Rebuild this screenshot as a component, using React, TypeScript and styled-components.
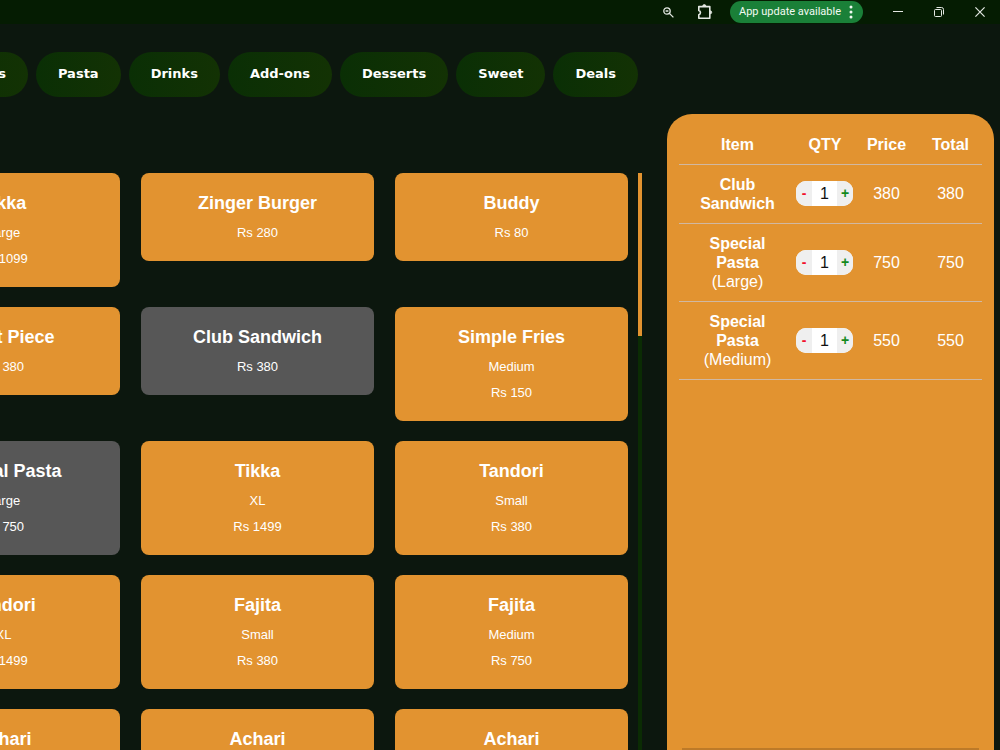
import React from "react";
import styled, { createGlobalStyle } from "styled-components";

const GlobalStyle = createGlobalStyle`
  * { box-sizing: border-box; }
  body {
    margin: 0;
    background: #0c170e;
    color: #fff;
    font-family: "Liberation Sans", Arial, sans-serif;
  }
  button, input { font: inherit; }
`;

const Window = styled.div`
  display: flex;
  flex-direction: column;
  height: 100vh;
  overflow: hidden;
`;

const TitleBar = styled.header`
  display: flex;
  flex: none;
  align-items: center;
  justify-content: flex-end;
  height: 24px;
  background: #051c02;
`;

const BarButton = styled.button<{ $width: number }>`
  display: flex;
  align-items: center;
  justify-content: center;
  width: ${(p) => p.$width}px;
  height: 24px;
  padding: 0;
  border: 0;
  background: none;
  color: #e4e8e3;
`;

const UpdateButton = styled.button`
  display: flex;
  align-items: center;
  justify-content: space-between;
  width: 133px;
  height: 22px;
  margin: 0 14px 0 6px;
  padding: 0 10px 0 9px;
  border: 0;
  border-radius: 11px;
  background: #1a8038;
  color: #f2faf3;
  font-family: Roboto, sans-serif;
  font-size: 11px;
  line-height: 16px;
  white-space: nowrap;
`;

const Body = styled.div`
  display: flex;
  flex: 1;
  min-height: 0;
  gap: 24px;
  padding-right: 6px;
`;

const Main = styled.main`
  display: flex;
  flex: 1;
  flex-direction: column;
  min-width: 0;
  overflow: hidden;
`;

const Categories = styled.nav`
  display: flex;
  flex: none;
  justify-content: flex-end;
  gap: 8px;
  padding: 28px 5px 0 0;
`;

const Category = styled.button`
  flex: none;
  height: 45px;
  padding: 0 22px 2px;
  border: 0;
  border-radius: 23px;
  background: linear-gradient(90deg, #0a2f05, #133204);
  color: #fff;
  font-family: "Arial Black", "DejaVu Sans", sans-serif;
  font-size: 13px;
  font-weight: 700;
`;

const Menu = styled.div`
  display: flex;
  flex: 1;
  gap: 10px;
  min-height: 0;
  margin: 76px 0 0 -113px;
`;

const CardGrid = styled.div`
  display: grid;
  flex: 1;
  grid-template-columns: repeat(3, 1fr);
  align-content: start;
  align-items: start;
  gap: 20px 21px;
`;

const Card = styled.button<{ $selected: boolean }>`
  display: flex;
  flex-direction: column;
  align-items: center;
  gap: 10px;
  padding: 19px 20px 20px;
  border: 0;
  border-radius: 8px;
  background: ${(p) => (p.$selected ? "#575757" : "#e29330")};
  color: #fff;
`;

const CardTitle = styled.strong`
  font-size: 18px;
  line-height: 23px;
`;

const CardLine = styled.span`
  font-size: 13px;
  line-height: 16px;
`;

const ScrollTrack = styled.div`
  width: 4px;
  margin-right: 1px;
  background: #0b2c04;
`;

const ScrollThumb = styled.div`
  height: 163px;
  background: #e29330;
`;

const Order = styled.aside`
  display: flex;
  flex: none;
  flex-direction: column;
  justify-content: space-between;
  width: 327px;
  margin-top: 90px;
  padding: 11px 12px 0;
  border-radius: 25px 25px 0 0;
  background: #e29330;
`;

const OrderTable = styled.table`
  width: 100%;
  border-collapse: collapse;
  table-layout: fixed;
  font-size: 16px;
  line-height: 19px;
  text-align: center;
`;

const OrderRow = styled.tr`
  border-bottom: 1px solid #d0b8a2;
`;

const HeadCell = styled.th<{ $width: string }>`
  width: ${(p) => p.$width};
  padding: 10px 0;
`;

const Cell = styled.td`
  padding: 9px 0 10px;
`;

const NameCell = styled.td`
  padding: 10px;
`;

const Size = styled.span`
  display: block;
`;

const Stepper = styled.div`
  display: flex;
  width: 57px;
  height: 25px;
  overflow: hidden;
  border-radius: 10px;
  background: #fff;
`;

const StepButton = styled.button<{ $color: string }>`
  flex: none;
  width: 16px;
  padding: 0;
  border: 0;
  background: #efefef;
  color: ${(p) => p.$color};
  font-size: 14px;
  font-weight: 700;
`;

const Quantity = styled.input`
  flex: 1;
  width: 100%;
  min-width: 0;
  padding: 0;
  border: 0;
  background: #fff;
  color: #111;
  text-align: center;
`;

const Footer = styled.div`
  height: 2px;
  margin: 0 3px;
  background: #bd7a28;
`;

const categories = ["Burgers", "Pasta", "Drinks", "Add-ons", "Desserts", "Sweet", "Deals"];

type Dish = { title: string; lines: string[]; selected?: boolean };

const dishes: Dish[] = [
  { title: "Tikka", lines: ["Large", "Rs 1099"] },
  { title: "Zinger Burger", lines: ["Rs 280"] },
  { title: "Buddy", lines: ["Rs 80"] },
  { title: "Chest Piece", lines: ["Rs 380"] },
  { title: "Club Sandwich", lines: ["Rs 380"], selected: true },
  { title: "Simple Fries", lines: ["Medium", "Rs 150"] },
  { title: "Special Pasta", lines: ["Large", "Rs 750"], selected: true },
  { title: "Tikka", lines: ["XL", "Rs 1499"] },
  { title: "Tandori", lines: ["Small", "Rs 380"] },
  { title: "Tandori", lines: ["XL", "Rs 1499"] },
  { title: "Fajita", lines: ["Small", "Rs 380"] },
  { title: "Fajita", lines: ["Medium", "Rs 750"] },
  { title: "Achari", lines: [] },
  { title: "Achari", lines: [] },
  { title: "Achari", lines: [] },
];

const order = [
  { name: "Club Sandwich", size: "", price: 380 },
  { name: "Special Pasta", size: "(Large)", price: 750 },
  { name: "Special Pasta", size: "(Medium)", price: 550 },
];

export default function App() {
  return (
    <>
      <GlobalStyle />
      <Window>
        <TitleBar>
          <BarButton $width={36} aria-label="Zoom">
            <svg width="11" height="11" viewBox="0 0 11 11" fill="none" stroke="currentColor" strokeWidth="1.3">
              <circle cx="4" cy="4" r="3.2" />
              <path d="M6.4 6.4 10.4 10.4M2.6 4h2.8" />
            </svg>
          </BarButton>
          <BarButton $width={38} aria-label="Extensions">
            <svg width="16" height="16" viewBox="0 0 16 16" fill="none" stroke="currentColor" strokeWidth="1.6" strokeLinejoin="round">
              <path d="M1.8 2.6h11v11.6h-11v-3.4c2.2-.6 2.2-3.8 0-4.4z" />
              <path d="M5.8 2a1.5 1.5 0 0 1 3 0zM13.2 6.8a1.5 1.5 0 0 1 0 3z" fill="currentColor" strokeWidth=".8" />
            </svg>
          </BarButton>
          <UpdateButton>
            App update available
            <svg width="4" height="14" viewBox="0 0 4 14" fill="currentColor">
              <circle cx="2" cy="2" r="1.5" />
              <circle cx="2" cy="7" r="1.5" />
              <circle cx="2" cy="12" r="1.5" />
            </svg>
          </UpdateButton>
          <BarButton $width={41} aria-label="Minimize">
            <svg width="10" height="10" viewBox="0 0 10 10" stroke="currentColor">
              <path d="M0 4.5h10" />
            </svg>
          </BarButton>
          <BarButton $width={42} aria-label="Restore">
            <svg width="10" height="10" viewBox="0 0 10 10" fill="none" stroke="currentColor">
              <rect x="0.5" y="2.5" width="7" height="7" rx="1" />
              <path d="M2.5 .5h5a2 2 0 0 1 2 2v5" />
            </svg>
          </BarButton>
          <BarButton $width={40} aria-label="Close">
            <svg width="10" height="10" viewBox="0 0 10 10" stroke="currentColor" strokeWidth="1.2">
              <path d="m.4.4 9.2 9.2M9.6.4.4 9.6" />
            </svg>
          </BarButton>
        </TitleBar>
        <Body>
          <Main>
            <Categories>
              {categories.map((name) => (
                <Category key={name}>{name}</Category>
              ))}
            </Categories>
            <Menu>
              <CardGrid>
                {dishes.map((dish, i) => (
                  <Card key={i} $selected={Boolean(dish.selected)}>
                    <CardTitle>{dish.title}</CardTitle>
                    {dish.lines.map((line) => (
                      <CardLine key={line}>{line}</CardLine>
                    ))}
                  </Card>
                ))}
              </CardGrid>
              <ScrollTrack>
                <ScrollThumb />
              </ScrollTrack>
            </Menu>
          </Main>
          <Order>
            <OrderTable>
              <thead>
                <OrderRow>
                  <HeadCell $width="117px">Item</HeadCell>
                  <HeadCell $width="58px">QTY</HeadCell>
                  <HeadCell $width="65px">Price</HeadCell>
                  <HeadCell $width="auto">Total</HeadCell>
                </OrderRow>
              </thead>
              <tbody>
                {order.map((item, i) => (
                  <OrderRow key={i}>
                    <NameCell>
                      <b>{item.name}</b>
                      {item.size && <Size>{item.size}</Size>}
                    </NameCell>
                    <Cell>
                      <Stepper>
                        <StepButton $color="#f2102a">-</StepButton>
                        <Quantity aria-label={`${item.name} quantity`} defaultValue="1" />
                        <StepButton $color="#138a1e">+</StepButton>
                      </Stepper>
                    </Cell>
                    <Cell>{item.price}</Cell>
                    <Cell>{item.price}</Cell>
                  </OrderRow>
                ))}
              </tbody>
            </OrderTable>
            <Footer />
          </Order>
        </Body>
      </Window>
    </>
  );
}
